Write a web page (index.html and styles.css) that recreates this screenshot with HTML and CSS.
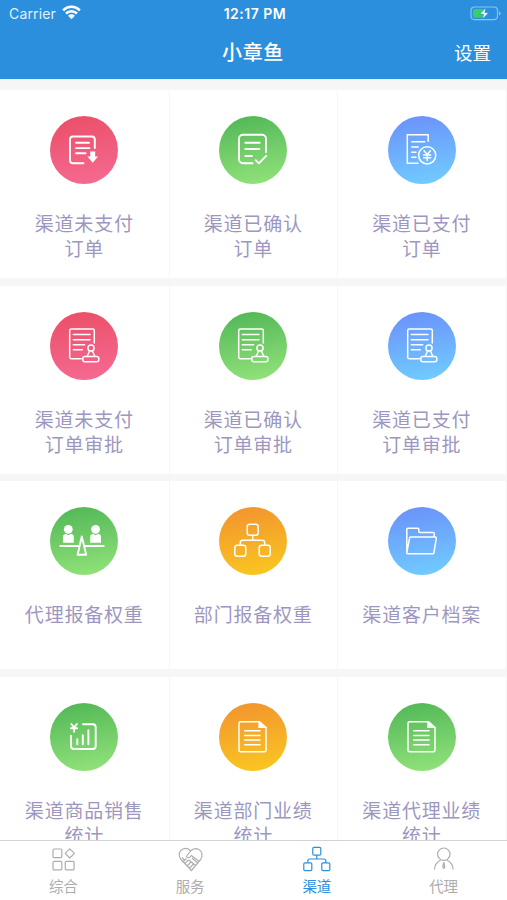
FILE: index.html
```html
<!DOCTYPE html>
<html lang="zh-CN">
<head>
    <meta charset="UTF-8">
    <meta name="viewport" content="width=device-width, initial-scale=1.0">
    <title>小章鱼</title>
    <link rel="stylesheet" href="styles.css">
</head>
<body>
    <!-- Shared icons -->
    <svg class="symbols" width="0" height="0">
        <symbol id="stamp" viewBox="0 0 68 68">
            <path d="M31.3 46.7H21.2a1.5 1.5 0 0 1-1.5-1.5V18.5a1.5 1.5 0 0 1 1.5-1.5h21.6a1.5 1.5 0 0 1 1.5 1.5V31M23.3 22.5H40M23.3 27.7H40M23.3 32.7h11.4M23.3 37.7h9"/>
            <circle cx="41" cy="36" r="3.1"/>
            <path d="M39.6 39l-2.4 5.2M42.4 39l2.4 5.2"/>
            <rect x="32.8" y="44.5" width="16" height="5.3" rx="2"/>
        </symbol>
        <symbol id="report" viewBox="0 0 68 68">
            <path d="M40 18.7H21.5a1.5 1.5 0 0 0-1.5 1.5v27a1.5 1.5 0 0 0 1.5 1.5h24a1.5 1.5 0 0 0 1.5-1.5V24.5M25.7 27.7H41M25.7 32.4H41M25.7 37H41M25.7 41.7H41"/>
            <path class="solid" d="M39.3 18h1.5l7 6.2v.9h-8.5z"/>
        </symbol>
    </svg>

    <div class="app">
        <div class="header">
            <div class="status">
                <div class="carrier">
                    <span>Carrier</span>
                    <svg class="wifi" width="19" height="15" viewBox="0 0 19 15">
                        <path d="M1.1 5.3a12 12 0 0 1 16.8 0M4 8.5a7.8 7.8 0 0 1 11 0"/>
                        <path class="dot" d="M9.5 14.2L6.1 10.7a4.8 4.8 0 0 1 6.8 0z"/>
                    </svg>
                </div>
                <div class="time">12:17 PM</div>
                <svg class="battery" width="31" height="15" viewBox="0 0 31 15">
                    <rect class="shell" x="1" y="1" width="26.5" height="12.6" rx="3.5"/>
                    <path class="level" d="M5 3h9.5l-4 5.2h2.7l-.8 3.5H5a2 2 0 0 1-2-2V5a2 2 0 0 1 2-2z"/>
                    <path class="tip" d="M29 5.2q1.6.8 1.6 2.1T29 9.4z"/>
                    <path class="bolt" d="M15.9 1.8L9.8 8.1h3.8l-1.1 4.9 6.1-6.3h-3.8z"/>
                </svg>
            </div>
            <div class="nav">
                <div class="title">小章鱼</div>
                <div class="setting">设置</div>
            </div>
        </div>

        <div class="grid">
            <div class="item">
                <svg class="icon red" viewBox="0 0 68 68">
                    <path class="bold" d="M33.5 47.3H23a3 3 0 0 1-3-3V23.5a3 3 0 0 1 3-3h18.8a3 3 0 0 1 3 3V32M26 26.7h13M26 32.1h13.5M26 37.3h9.5"/>
                    <path class="solid" d="M40.2 35.5h5v5H48l-5.3 6.2-5.3-6.2h2.8z"/>
                </svg>
                <p>渠道未支付<br>订单</p>
            </div>
            <div class="item">
                <svg class="icon green" viewBox="0 0 68 68">
                    <path class="bold" d="M33.5 47.3H24a4 4 0 0 1-4-4V22.8a4 4 0 0 1 4-4h19a4 4 0 0 1 4 4V36M26.3 26.7h14.4M26.3 33h14M26.3 40H33M36.7 44.2l3.2 3.2 7.3-7.6"/>
                </svg>
                <p>渠道已确认<br>订单</p>
            </div>
            <div class="item">
                <svg class="icon blue" viewBox="0 0 68 68">
                    <path d="M30 47.3H19.3V18.8H40.2v6.5M23.7 25.7h13M23.7 31h6.6M23.7 36.3H28M23.7 41.3H28"/>
                    <circle cx="39.2" cy="39.3" r="8.6"/>
                    <path d="M36 34.8l3.2 3.7 3.2-3.7M39.2 38.5v6M35.7 39h7M35.7 41.7h7"/>
                </svg>
                <p>渠道已支付<br>订单</p>
            </div>

            <div class="item">
                <svg class="icon red"><use href="#stamp"/></svg>
                <p>渠道未支付<br>订单审批</p>
            </div>
            <div class="item">
                <svg class="icon green"><use href="#stamp"/></svg>
                <p>渠道已确认<br>订单审批</p>
            </div>
            <div class="item">
                <svg class="icon blue"><use href="#stamp"/></svg>
                <p>渠道已支付<br>订单审批</p>
            </div>

            <div class="item">
                <svg class="icon green" viewBox="0 0 68 68">
                    <circle class="solid" cx="18.3" cy="22.3" r="4.4"/>
                    <circle class="solid" cx="45.6" cy="22.3" r="4.4"/>
                    <path class="solid" d="M13 35.7v-6q0-2.8 3-2.8l2.4 1.4 2.4-1.4q3 0 3 2.8v6zM40.2 35.7v-6q0-2.8 3-2.8l2.4 1.4 2.4-1.4q3 0 3 2.8v6z"/>
                    <path class="bold" d="M10.3 39h18.2M35 39h18.7M31.8 29.5l-4.2 18.2h8.6z"/>
                </svg>
                <p>代理报备权重</p>
            </div>
            <div class="item">
                <svg class="icon orange" viewBox="0 0 68 68">
                    <rect x="28.2" y="17.3" width="11" height="11" rx="2.5"/>
                    <rect x="15.8" y="38.2" width="11" height="11" rx="2.5"/>
                    <rect x="40.2" y="38.2" width="11" height="11" rx="2.5"/>
                    <path d="M33.7 28.3v5M21.3 38v-2.2a2.5 2.5 0 0 1 2.5-2.5h19.4a2.5 2.5 0 0 1 2.5 2.5V38"/>
                </svg>
                <p>部门报备权重</p>
            </div>
            <div class="item">
                <svg class="icon blue" viewBox="0 0 68 68">
                    <path d="M18.8 46V22.2a1 1 0 0 1 1-1h10a1 1 0 0 1 1 1v2.2a1 1 0 0 0 1 1h13.4a1 1 0 0 1 1 1V30M22.6 30.1h24.7a1 1 0 0 1 1 1.2l-2.4 14.6a1 1 0 0 1-1 .9H19.8a1 1 0 0 1-1-1.2L21.6 31a1 1 0 0 1 1-.9z"/>
                </svg>
                <p>渠道客户档案</p>
            </div>

            <div class="item">
                <svg class="icon green" viewBox="0 0 68 68">
                    <path class="bold" d="M33 21.3h9.7a3 3 0 0 1 3 3V43a3 3 0 0 1-3 3H24a3 3 0 0 1-3-3V32.7M27.3 36.3v4.9M32.8 32.3v8.9M38.4 27.3v13.9"/>
                    <path class="bold" d="M21.3 21l2.8 3.3 2.8-3.3M24.1 24.3v4.5M21 25.3h6.2"/>
                </svg>
                <p>渠道商品销售<br>统计</p>
            </div>
            <div class="item">
                <svg class="icon orange"><use href="#report"/></svg>
                <p>渠道部门业绩<br>统计</p>
            </div>
            <div class="item">
                <svg class="icon green"><use href="#report"/></svg>
                <p>渠道代理业绩<br>统计</p>
            </div>
        </div>

        <div class="tabbar">
            <div class="tab">
                <svg viewBox="0 0 32 28">
                    <rect x="6" y="4" width="8.8" height="8.6" rx="1"/>
                    <rect x="6" y="16.3" width="8.8" height="8.6" rx="1"/>
                    <rect x="18.3" y="16.3" width="8.8" height="8.6" rx="1"/>
                    <path d="M22.8 3.8l4.6 4.6-4.6 4.6-4.6-4.6z"/>
                </svg>
                <span>综合</span>
            </div>
            <div class="tab">
                <svg viewBox="0 0 32 28">
                    <path d="M16.6 6C14.6 3.6 11.5 3 9 4 5 5.6 4 10.5 6.6 14L17.5 25.5 26.6 14.5C29.2 11 28.2 6 24.5 4.3 21.5 3 18.5 4 16.6 6L12.3 11.5c1.2 2 3.7 1.2 5-1l8 6M8 12.5l3 3M12.5 13.5l-4 3.7M14.5 15l-4.2 4.2M17 17l-4.3 4.5M19.5 19l-4.5 4.800M15 15l6.5 5.5M18 13l5.5 5"/>
                </svg>
                <span>服务</span>
            </div>
            <div class="tab active">
                <svg viewBox="0 0 32 28">
                    <rect x="11.8" y="2.4" width="8" height="7.8" rx="1.2"/>
                    <rect x="2.8" y="17.8" width="8" height="7.8" rx="1.2"/>
                    <rect x="20.8" y="17.8" width="8" height="7.8" rx="1.2"/>
                    <path d="M15.8 10.2V14M6.8 17.8V16a2 2 0 0 1 2-2h14a2 2 0 0 1 2 2v1.8"/>
                </svg>
                <span>渠道</span>
            </div>
            <div class="tab">
                <svg viewBox="0 0 32 28">
                    <circle cx="15.8" cy="9.2" r="6.2"/>
                    <path d="M6.5 24.5c.2-4.5 2.5-7.700 6-9.300M25.100 24.500c-.2-4.500-2.500-7.700-6-9.300M15.800 17.500l-1 4.500 1 1.500 1-1.500z"/>
                </svg>
                <span>代理</span>
            </div>
        </div>
    </div>
</body>
</html>
```

FILE: styles.css
```css
* {
    box-sizing: border-box;
}
body, html {
    margin: 0;
    padding: 0;
    height: 100%;
    overflow: hidden;
    font-family: 'Noto Sans CJK SC', sans-serif;
    background-color: #f6f6f6;
}
.symbols {
    display: none;
}
.app {
    height: 900px;
    display: flex;
    flex-direction: column;
}
.header {
    flex: none;
    height: 79px;
    background-color: #2b8fde;
    color: #fff;
}
.status {
    height: 27px;
    display: grid;
    grid-template-columns: 1fr auto 1fr;
    align-items: center;
    padding: 0 6px 0 9px;
    font-family: Inter, sans-serif;
    font-size: 14px;
}
.carrier {
    display: flex;
    align-items: center;
    gap: 6px;
    color: #e3f1fc;
    letter-spacing: 0.15px;
}
.wifi {
    margin-top: -2px;
    fill: none;
    stroke: #fff;
    stroke-width: 2.5;
}
.wifi .dot {
    fill: #fff;
    stroke: none;
}
.time {
    font-weight: 600;
    letter-spacing: 0.5px;
}
.battery {
    justify-self: end;
}
.shell {
    fill: none;
    stroke: #8cc2ee;
    stroke-width: 1.2;
}
.level {
    fill: #37cf62;
}
.tip {
    fill: #8cc2ee;
}
.bolt {
    fill: #fff;
    stroke: #2b8fde;
    stroke-width: 0.6;
}
.nav {
    height: 49px;
    display: grid;
    grid-template-columns: 1fr auto 1fr;
    align-items: center;
    padding: 0 16px 0 15px;
}
.title {
    grid-column: 2;
    font-size: 20px;
    font-weight: 500;
    letter-spacing: 0.7px;
}
.setting {
    justify-self: end;
    font-size: 18.5px;
}
.grid {
    flex: 1;
    min-height: 0;
    overflow: hidden;
    display: grid;
    grid-template-columns: 168.5px 167.5px 167.5px;
    grid-auto-rows: 188px;
    column-gap: 1px;
    row-gap: 7.6px;
    padding-top: 10px;
    border-top: 1px solid #e4f0fa;
}
.item {
    display: flex;
    flex-direction: column;
    align-items: center;
    padding-top: 26px;
    background-color: #fff;
}
.item p {
    margin: 26px 0 0;
    font-size: 19px;
    font-weight: 400;
    line-height: 25px;
    letter-spacing: 0.8px;
    text-align: center;
    color: #9d97c0;
}
.icon {
    flex: none;
    width: 68px;
    height: 68px;
    border-radius: 50%;
    fill: none;
    stroke: #fff;
    stroke-width: 1.5;
    stroke-linecap: round;
    stroke-linejoin: round;
}
.icon .bold {
    stroke-width: 1.9;
}
.solid {
    fill: #fff;
    stroke: none;
}
.red {
    background: linear-gradient(170deg, #ea4e66, #f66b94);
}
.green {
    background: linear-gradient(170deg, #50b656, #94e47b);
}
.blue {
    background: linear-gradient(170deg, #6b8ffa, #70cfff);
}
.orange {
    background: linear-gradient(170deg, #f2922f, #fac920);
}
.tabbar {
    flex: none;
    height: 60px;
    display: flex;
    background-color: #fff;
    border-top: 1px solid #d3d3d3;
}
.tab {
    flex: 1;
    display: flex;
    flex-direction: column;
    align-items: center;
    padding-top: 4px;
    color: #adadad;
    font-size: 14.5px;
    line-height: 26px;
}
.tab svg {
    width: 32px;
    height: 28px;
    fill: none;
    stroke: currentColor;
    stroke-width: 1.2;
    stroke-linejoin: round;
}
.tab.active {
    color: #2b8fde;
}
```
